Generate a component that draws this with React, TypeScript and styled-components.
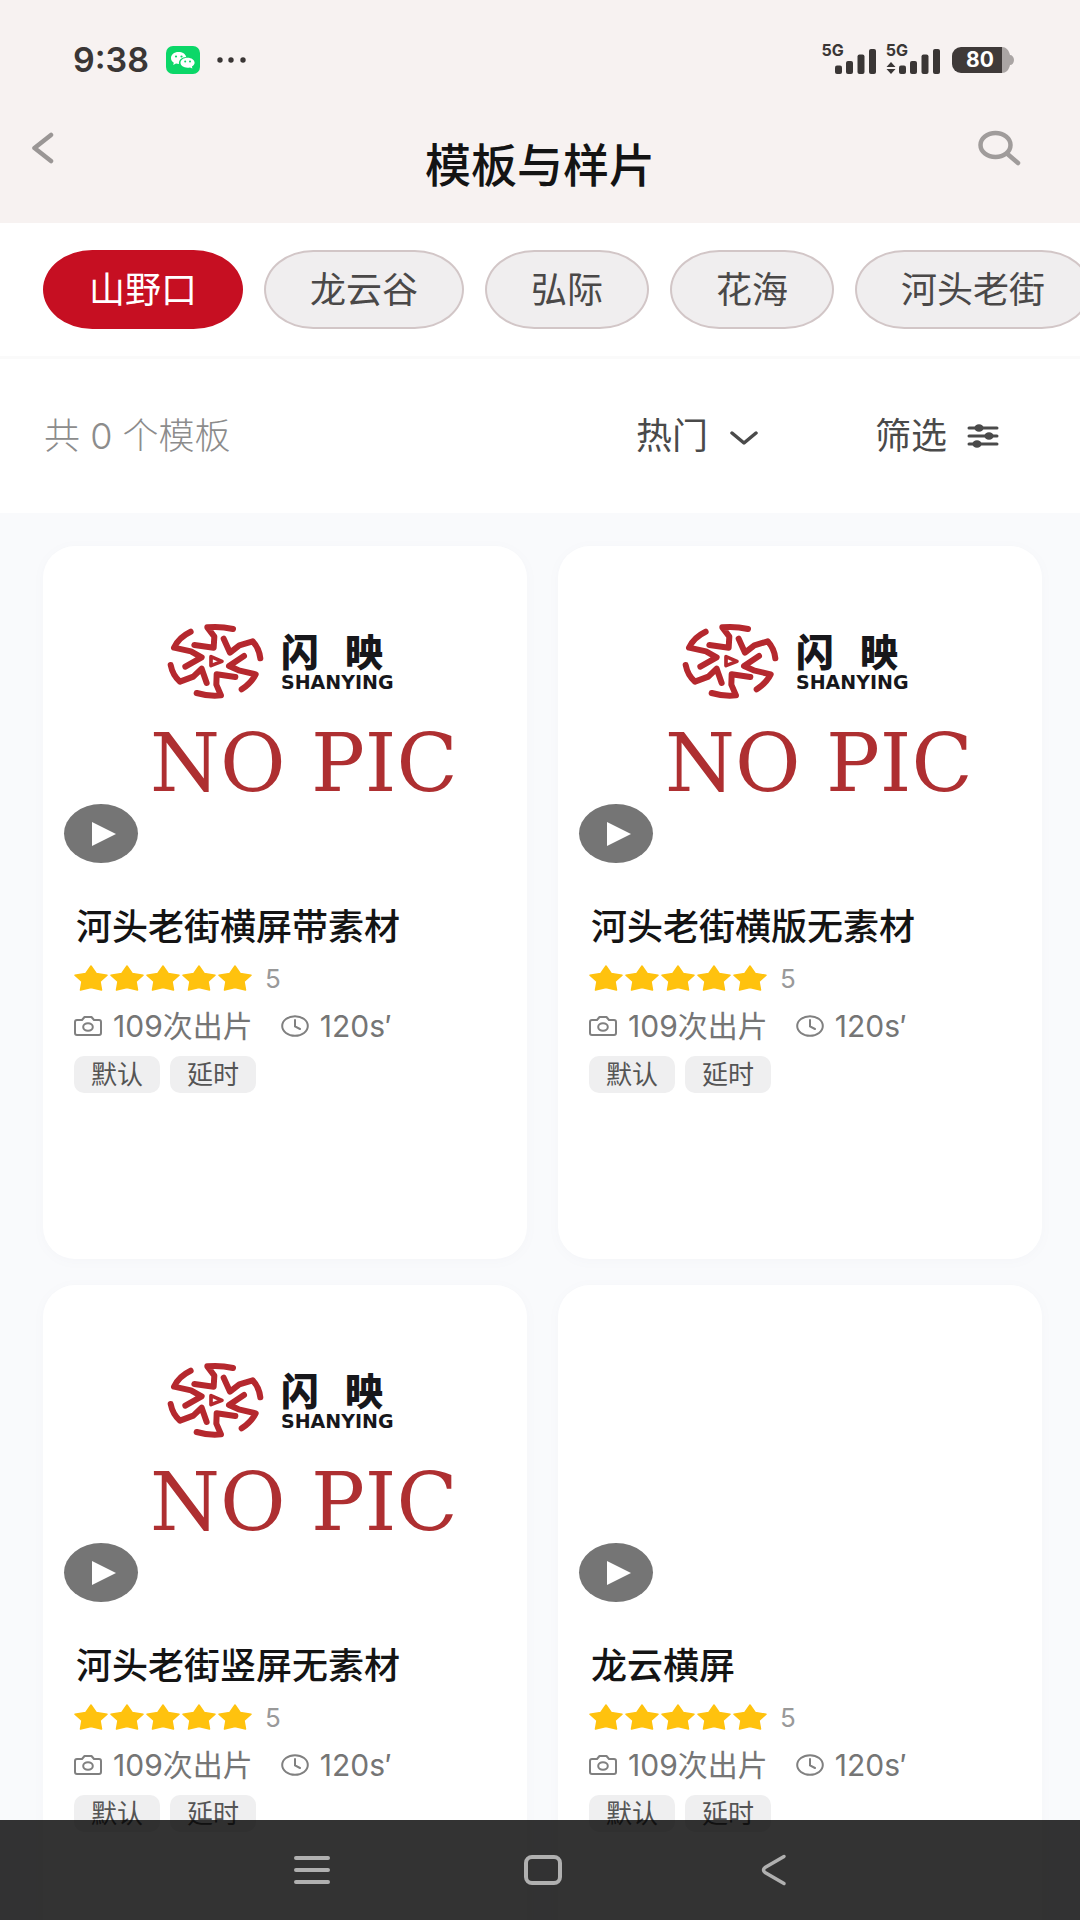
import React, { useState } from "react";
import styled, { createGlobalStyle } from "styled-components";

const GlobalStyle = createGlobalStyle`
  * { box-sizing: border-box; }
  body {
    margin: 0;
    background: #f9fafc;
    font-family: Inter, "Noto Sans CJK SC", sans-serif;
    color: #141414;
  }
  button, select { font: inherit; color: inherit; }
`;

const Screen = styled.div`
  display: flex;
  flex-direction: column;
  height: 100vh;
  overflow: hidden;
`;

const Header = styled.header`
  background: #f7f2f1;
`;

const StatusBar = styled.div`
  display: flex;
  align-items: center;
  justify-content: space-between;
  height: 120px;
  padding: 0 66px 0 73px;
  color: #3a3635;
`;

const StatusGroup = styled.div<{ $gap: number }>`
  display: flex;
  align-items: center;
  gap: ${(p) => p.$gap}px;
`;

const Clock = styled.span`
  font-size: 34px;
  line-height: 40px;
  font-weight: 600;
`;

const Network = styled.div`
  display: flex;
  align-items: flex-end;
  height: 28px;
`;

const NetworkSide = styled.div<{ $overlap: number }>`
  display: flex;
  flex-direction: column;
  align-items: flex-start;
  justify-content: space-between;
  height: 30px;
  margin-right: -${(p) => p.$overlap}px;
  font-size: 16px;
  line-height: 12px;
  font-weight: 700;
`;

const Battery = styled.div`
  display: flex;
  align-items: center;
  margin-left: 2px;
`;

const BatteryBody = styled.div`
  width: 50px;
  height: 26px;
  padding-left: 6px;
  border-radius: 9px 0 0 9px;
  background: #3f3a39;
  color: #fff;
  font-size: 21px;
  line-height: 26px;
  font-weight: 700;
  text-align: center;
`;

const TitleBar = styled.div`
  display: grid;
  grid-template-columns: 1fr auto 1fr;
  align-items: start;
  height: 103px;
  padding: 0 30px;
`;

const PageTitle = styled.h1`
  margin: 0;
  padding-top: 15px;
  font-size: 46px;
  line-height: 60px;
  font-weight: 500;
`;

const IconButton = styled.button<{ $end?: boolean }>`
  display: flex;
  align-items: center;
  justify-self: ${(p) => (p.$end ? "end" : "start")};
  height: 56px;
  padding: ${(p) => (p.$end ? "0 28px 0 0" : "0")};
  border: 0;
  background: none;
  cursor: pointer;
`;

const Tabs = styled.nav`
  display: flex;
  flex-shrink: 0;
  gap: 21px;
  padding: 27px 43px 27px;
  border-bottom: 3px solid #fafafa;
  background: #fff;
  overflow-x: auto;
  scrollbar-width: none;
`;

const Tab = styled.button<{ $active: boolean }>`
  flex-shrink: 0;
  height: 79px;
  padding: 0 44px;
  border: 2px solid ${(p) => (p.$active ? "#c60f22" : "#d2c6c7")};
  border-radius: 50px / 40px;
  background: ${(p) => (p.$active ? "#c60f22" : "#f0eeef")};
  color: ${(p) => (p.$active ? "#fff" : "#4a4848")};
  font-size: 36px;
  line-height: 44px;
  cursor: pointer;
`;

const Toolbar = styled.div`
  display: flex;
  flex-shrink: 0;
  align-items: center;
  height: 154px;
  padding: 0 81px 0 44px;
  background: #fff;
  color: #4a4a4a;
  font-size: 36px;
  line-height: 44px;
`;

const Count = styled.p`
  flex: 1;
  margin: 0;
  color: #8c8c8c;
  font-weight: 300;
`;

const SortLabel = styled.label`
  display: flex;
  align-items: center;
  gap: 20px;
  margin-right: 117px;
`;

const SortSelect = styled.select`
  width: 74px;
  padding: 0;
  border: 0;
  background: none;
  appearance: none;
  line-height: 44px;
  cursor: pointer;
`;

const FilterButton = styled.button`
  display: flex;
  align-items: center;
  gap: 20px;
  padding: 0;
  border: 0;
  background: none;
  cursor: pointer;
`;

const Feed = styled.main`
  flex: 1;
  min-height: 0;
  overflow-y: auto;
  scrollbar-width: none;
  padding: 33px 38px 126px 43px;
`;

const Grid = styled.div`
  display: grid;
  grid-template-columns: repeat(2, minmax(0, 1fr));
  gap: 26px 31px;
`;

const Card = styled.article`
  min-height: 713px;
  border-radius: 32px;
  background: #fff;
  overflow: hidden;
  box-shadow: 0 2px 12px rgba(120, 140, 150, 0.04);
`;

const Cover = styled.div`
  position: relative;
  height: 359px;
  padding-top: 75px;
`;

const Brand = styled.div`
  display: flex;
  align-items: center;
  gap: 17px;
  height: 80px;
  padding-left: 124px;
`;

const BrandText = styled.div`
  display: flex;
  flex-direction: column;
  color: #17171b;
  white-space: pre;
`;

const BrandName = styled.span`
  font-family: "Noto Sans CJK SC", sans-serif;
  font-size: 38px;
  line-height: 42px;
  font-weight: 900;
`;

const BrandLatin = styled.span`
  font-family: "DejaVu Sans", sans-serif;
  font-size: 19px;
  line-height: 22px;
  font-weight: 700;
`;

const NoPic = styled.p`
  margin: 17px 0 0;
  padding-left: 107px;
  color: #ae2f31;
  font-family: "DejaVu Serif", serif;
  font-size: 80px;
  line-height: 92px;
  white-space: nowrap;
`;

const PlayButton = styled.button`
  position: absolute;
  left: 21px;
  bottom: 42px;
  display: flex;
  align-items: center;
  justify-content: center;
  width: 74px;
  height: 59px;
  padding: 0 0 0 6px;
  border: 0;
  border-radius: 50%;
  background: #757575;
  cursor: pointer;
`;

const Info = styled.div`
  display: flex;
  flex-direction: column;
  padding: 0 31px;
`;

const CardTitle = styled.h2`
  margin: 0;
  padding-left: 2px;
  font-size: 36px;
  line-height: 44px;
  font-weight: 500;
  white-space: nowrap;
`;

const Rating = styled.div`
  display: flex;
  align-items: center;
  gap: 2px;
  height: 58px;
  color: #999;
  font-size: 26px;
`;

const Score = styled.span`
  padding-left: 11px;
`;

const Meta = styled.div`
  display: flex;
  align-items: center;
  gap: 11px;
  height: 38px;
  color: #757575;
  font-size: 30px;
  white-space: nowrap;
`;

const MetaText = styled.span`
  line-height: 38px;
  & + svg { margin-left: 17px; }
`;

const Tags = styled.div`
  display: flex;
  gap: 10px;
  padding-top: 11px;
`;

const Tag = styled.span`
  padding: 0 17px;
  border-radius: 10px;
  background: #efeff0;
  color: #555;
  font-size: 26px;
  line-height: 37px;
`;

const SystemBar = styled.nav`
  position: fixed;
  left: 0;
  right: 0;
  bottom: 0;
  display: flex;
  align-items: center;
  justify-content: center;
  gap: 193px;
  height: 100px;
  padding-left: 5px;
  background: rgba(0, 0, 0, 0.8);
`;

const SystemButton = styled.button`
  display: flex;
  justify-content: center;
  width: 38px;
  padding: 0;
  border: 0;
  background: none;
  cursor: pointer;
`;

const WeChatIcon = () => (
  <svg width="34" height="28" viewBox="0 0 34 28" aria-hidden="true">
    <rect width="34" height="28" rx="7" fill="#0bd768" />
    <path d="M12.5 6C8 6 5 8.700 5 12c0 2 1 3.700 2.800 4.800L7.200 19l2.800-1.400c.8.200 2 .3 3 .3-.6-4 3-7 7.200-7C19.500 8 16.500 6 12.500 6z" fill="#fff" />
    <path d="M21.500 11.800c-4 0-7 2.200-7 5s3 4.900 7 4.900c.9 0 1.700-.1 2.500-.3l2.400 1.100-.5-2c1.700-.9 2.700-2.200 2.700-3.700 0-2.800-3.100-5-7.100-5z" fill="#fff" />
    <g fill="#0bd768">
      <circle cx="10" cy="10.500" r="1.100" /><circle cx="15.500" cy="10.500" r="1.100" />
      <circle cx="19.200" cy="15.500" r="1" /><circle cx="24" cy="15.500" r="1" />
    </g>
  </svg>
);

const DotsIcon = () => (
  <svg width="30" height="6" viewBox="0 0 30 6" fill="#3a3635" aria-hidden="true">
    <circle cx="3" cy="3" r="2.700" /><circle cx="14" cy="3" r="2.700" /><circle cx="26" cy="3" r="2.700" />
  </svg>
);

const BarsIcon = () => (
  <svg width="41" height="26" viewBox="0 0 41 26" fill="#3a3635" aria-hidden="true">
    <rect y="17.500" width="7" height="8.500" rx="2" />
    <rect x="11" y="13" width="7" height="13" rx="2" />
    <rect x="22.500" y="6.500" width="7" height="19.500" rx="2" />
    <rect x="34" y="1" width="7" height="25" rx="2" />
  </svg>
);

const DataArrows = () => (
  <svg width="10" height="12" viewBox="0 0 10 12" fill="#3a3635" aria-hidden="true">
    <path d="M5 0l4.500 5h-9zM5 12l4.500-5h-9z" />
  </svg>
);

const BatteryTip = () => (
  <svg width="12" height="26" viewBox="0 0 12 26" fill="#aaa5a4" aria-hidden="true">
    <path d="M0 0c4 0 7 3 8 8 2 0 4 2 4 5s-2 5-4 5c-1 5-4 8-8 8z" />
  </svg>
);

const BackIcon = () => (
  <svg width="26" height="32" viewBox="0 0 26 32" fill="none" stroke="#9a9695" strokeWidth="4.500" strokeLinecap="round" strokeLinejoin="round" aria-hidden="true">
    <path d="M21 3L4.500 16 21 29" />
  </svg>
);

const SearchIcon = () => (
  <svg width="44" height="36" viewBox="0 0 44 36" fill="none" stroke="#a09c9b" strokeWidth="4.500" strokeLinecap="round" aria-hidden="true">
    <ellipse cx="17.500" cy="15" rx="15" ry="12" />
    <path d="M29.500 24L40 33" />
  </svg>
);

const ChevronDown = () => (
  <svg width="28" height="20" viewBox="0 0 28 20" fill="none" stroke="#4a4a4a" strokeWidth="3.500" strokeLinecap="round" strokeLinejoin="round" aria-hidden="true">
    <path d="M2 7l12 10L26 7" />
  </svg>
);

const FilterIcon = () => (
  <svg width="32" height="28" viewBox="0 0 32 28" fill="#4a4a4a" stroke="#4a4a4a" strokeWidth="3" strokeLinecap="round" aria-hidden="true">
    <path d="M2 6h28M2 14h28M2 22h28" />
    <g stroke="none">
      <ellipse cx="12" cy="6" rx="4.500" ry="3.800" />
      <ellipse cx="22" cy="14" rx="4.500" ry="3.800" />
      <ellipse cx="10" cy="22" rx="4.500" ry="3.800" />
    </g>
  </svg>
);

const Emblem = () => (
  <svg width="97" height="78" viewBox="23 20 291 234" fill="none" stroke="#b5282e" strokeWidth="18" strokeLinecap="round" strokeLinejoin="round" aria-hidden="true">
    <path d="M221 41Q182 32 144 36L165 64L163 97L105 89" />
    <path d="M303 129Q300 100 280 78L240 90L212 112L193 70" />
    <path d="M247 222Q276 203 289 177L238 165L209 152L254 122" />
    <path d="M112 233Q150 244 185 240L171 208L172 177L228 185" />
    <path d="M34 149Q40 180 62 199L102 184L127 160L142 203" />
    <path d="M94 49Q58 66 44 97L95 108L127 126L78 154" />
    <path d="M155 124L188 138L155 151Z" strokeWidth="11" />
  </svg>
);

const PlayIcon = () => (
  <svg width="24" height="24" viewBox="0 0 24 24" fill="#fff" aria-hidden="true">
    <path d="M0 0l24 12L0 24z" />
  </svg>
);

const StarIcon = () => (
  <svg width="34" height="26" viewBox="0 0 34 26" fill="#ffc20e" stroke="#ffc20e" strokeWidth="1.500" strokeLinejoin="round" aria-hidden="true">
    <path d="M17 1l5.200 7.500L33 10.300l-7 6.200L27.500 25 17 22.500 6.500 25 8 16.500l-7-6.200 10.800-1.800z" />
  </svg>
);

const CameraIcon = () => (
  <svg width="28" height="20" viewBox="0 0 28 20" fill="none" stroke="#808080" strokeWidth="2" strokeLinejoin="round" aria-hidden="true">
    <path d="M3 4h5l2.500-3h7L20 4h5q2 0 2 2v11q0 2-2 2H3q-2 0-2-2V6q0-2 2-2z" />
    <ellipse cx="14" cy="11" rx="4.800" ry="3.800" />
  </svg>
);

const TimeIcon = () => (
  <svg width="28" height="22" viewBox="0 0 28 22" fill="none" stroke="#808080" strokeWidth="2" strokeLinecap="round" aria-hidden="true">
    <ellipse cx="14" cy="11" rx="12.800" ry="9.800" />
    <path d="M14 5v6.500l5 2.500" />
  </svg>
);

const MenuIcon = () => (
  <svg width="38" height="30" viewBox="0 0 38 30" stroke="#b0b0b0" strokeWidth="4" strokeLinecap="round" aria-hidden="true">
    <path d="M3 3h32M3 15h32M3 27h32" />
  </svg>
);

const HomeIcon = () => (
  <svg width="38" height="30" viewBox="0 0 38 30" fill="none" stroke="#b0b0b0" strokeWidth="4" aria-hidden="true">
    <rect x="2" y="2" width="34" height="26" rx="6" />
  </svg>
);

const SystemBackIcon = () => (
  <svg width="26" height="32" viewBox="0 0 26 32" fill="none" stroke="#b0b0b0" strokeWidth="3.500" strokeLinecap="round" strokeLinejoin="round" aria-hidden="true">
    <path d="M23 2.500L4 13.500Q1 16 4 18.500L23 29.500" />
  </svg>
);

const places = ["山野口", "龙云谷", "弘际", "花海", "河头老街"];

const templates = [
  { title: "河头老街横屏带素材", cover: true },
  { title: "河头老街横版无素材", cover: true },
  { title: "河头老街竖屏无素材", cover: true },
  { title: "龙云横屏", cover: false },
];

function TemplateCard({ title, cover }: { title: string; cover: boolean }) {
  return (
    <Card>
      <Cover>
        {cover && (
          <>
            <Brand>
              <Emblem />
              <BrandText>
                <BrandName>{"闪   映"}</BrandName>
                <BrandLatin>SHANYING</BrandLatin>
              </BrandText>
            </Brand>
            <NoPic>NO PIC</NoPic>
          </>
        )}
        <PlayButton type="button" aria-label={`播放 ${title}`}>
          <PlayIcon />
        </PlayButton>
      </Cover>
      <Info>
        <CardTitle>{title}</CardTitle>
        <Rating>
          {[1, 2, 3, 4, 5].map((n) => (
            <StarIcon key={n} />
          ))}
          <Score>5</Score>
        </Rating>
        <Meta>
          <CameraIcon />
          <MetaText>109次出片</MetaText>
          <TimeIcon />
          <MetaText>120s′</MetaText>
        </Meta>
        <Tags>
          <Tag>默认</Tag>
          <Tag>延时</Tag>
        </Tags>
      </Info>
    </Card>
  );
}

export default function App() {
  const [place, setPlace] = useState(places[0]);
  return (
    <Screen>
      <GlobalStyle />
      <Header>
        <StatusBar>
          <StatusGroup $gap={17}>
            <Clock>9:38</Clock>
            <WeChatIcon />
            <DotsIcon />
          </StatusGroup>
          <StatusGroup $gap={10}>
            <Network>
              <NetworkSide $overlap={9}>5G</NetworkSide>
              <BarsIcon />
            </Network>
            <Network>
              <NetworkSide $overlap={9}>
                5G
                <DataArrows />
              </NetworkSide>
              <BarsIcon />
            </Network>
            <Battery>
              <BatteryBody>80</BatteryBody>
              <BatteryTip />
            </Battery>
          </StatusGroup>
        </StatusBar>
        <TitleBar>
          <IconButton type="button" aria-label="返回">
            <BackIcon />
          </IconButton>
          <PageTitle>模板与样片</PageTitle>
          <IconButton type="button" aria-label="搜索" $end>
            <SearchIcon />
          </IconButton>
        </TitleBar>
      </Header>
      <Tabs>
        {places.map((name) => (
          <Tab key={name} type="button" $active={name === place} onClick={() => setPlace(name)}>
            {name}
          </Tab>
        ))}
      </Tabs>
      <Toolbar>
        <Count>共 0 个模板</Count>
        <SortLabel>
          <SortSelect aria-label="排序">
            <option>热门</option>
          </SortSelect>
          <ChevronDown />
        </SortLabel>
        <FilterButton type="button">
          筛选
          <FilterIcon />
        </FilterButton>
      </Toolbar>
      <Feed>
        <Grid>
          {templates.map((t) => (
            <TemplateCard key={t.title} {...t} />
          ))}
        </Grid>
      </Feed>
      <SystemBar>
        <SystemButton type="button" aria-label="菜单">
          <MenuIcon />
        </SystemButton>
        <SystemButton type="button" aria-label="主屏幕">
          <HomeIcon />
        </SystemButton>
        <SystemButton type="button" aria-label="后退">
          <SystemBackIcon />
        </SystemButton>
      </SystemBar>
    </Screen>
  );
}
